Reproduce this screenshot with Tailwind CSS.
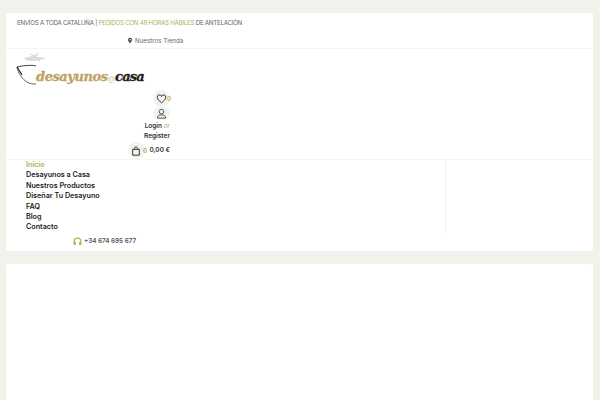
<!DOCTYPE html>
<html lang="en">
<head>
<meta charset="utf-8" />
<script src="https://cdn.jsdelivr.net/npm/@tailwindcss/browser@4"></script>
<title>Desayunos a Casa</title>
</head>
<body class="bg-[#f1f2ec] font-['Inter',sans-serif] h-[400px] overflow-hidden">
<div class="pt-[13px] px-[6px] pr-[7px]">
    <!-- Header card -->
    <div class="bg-white h-[238px] rounded-[2px] flex flex-col">
        <div class="h-[36px] border-b border-[#f6f6f3] pl-[11px]">
            <div class="h-[19px] flex items-center text-[6.200px] tracking-[-0.26px] text-[#666] whitespace-nowrap">
                <span>ENVÍOS A TODA CATALUÑA |&nbsp;</span>
                <span class="text-[#a9b55c]">PEDIDOS CON 48 HORAS HÁBILES</span>
                <span>&nbsp;DE ANTELACIÓN</span>
            </div>
            <div class="h-[17px] pl-[110px] flex items-center text-[6.200px] text-[#666]">
                <svg class="w-[6px] h-[7px] mr-[2px]" viewBox="0 0 24 24" fill="#444">
                    <path fill-rule="evenodd" d="M12 1a8 8 0 0 0-8 8c0 5.500 8 14 8 14s8-8.500 8-14a8 8 0 0 0-8-8zm0 5a3 3 0 1 1 0 6 3 3 0 0 1 0-6z" />
                </svg>
                Nuestros Tienda
            </div>
        </div>

        <!-- Logo -->
        <div class="h-[38px] pl-[10px] flex items-start">
            <svg class="w-[34px] h-[37px] shrink-0 mt-[1px]" viewBox="0 0 34 37" fill="none">
                <path d="M8 8c5-1 10-2 14-5 1 1 0 2-3 4 4 0 8 0 11 1-3 2-9 3-14 3-3 0-6 0-8-3z" fill="#dcdcd9" />
                <path d="M14 4c3 1 6 3 10 7" stroke="#cfcfcc" stroke-width="1" />
                <path d="M1 17c8-2 17-2 19-1" stroke="#444" stroke-width="1" />
                <path d="M1 17c1 6 5 12 10 15 3 2 6 2 9 2" stroke="#666" stroke-width="1" />
                <path d="M1 17l5 8" stroke="#222" stroke-width="1.200" />
            </svg>
            <div class="-ml-[14px] mt-[20px] font-['DejaVu_Serif',serif] font-bold italic text-[13px] leading-[16px] tracking-[-0.45px] whitespace-nowrap [-webkit-text-stroke:0.3px]">
                <span class="text-[#c0a265]">desayunos</span><span class="text-[#c9c3ae] text-[8px] font-normal not-italic [-webkit-text-stroke:0px]">@</span><span class="text-[#262019] tracking-[-0.8px]">casa</span>
            </div>
        </div>

        <!-- Header icons -->
        <div class="h-[72px] w-[164px] flex flex-col items-end text-[6.500px] font-semibold text-[#333]">
            <div class="flex items-center h-[17px] mt-[3px]">
                <span class="w-[17px] h-[17px] rounded-full bg-[#f3f3ee] flex items-center justify-center">
                    <svg class="w-[11px] h-[10px]" viewBox="0 0 24 24" fill="none" stroke="#222" stroke-width="2.200">
                        <path d="M12 21C6 16 2 13 2 8.500A5 5 0 0 1 12 6a5 5 0 0 1 10 2.500C22 13 18 16 12 21z" />
                    </svg>
                </span>
                <span class="text-[6px] font-bold text-[#d4b05a] w-[3px] -ml-[3px] leading-[5px]">0</span>
            </div>
            <span class="w-[17px] h-[17px] rounded-full bg-[#f3f3ee] flex items-center justify-center">
                <svg class="w-[11px] h-[11px]" viewBox="0 0 24 24" fill="none" stroke="#222" stroke-width="1.600">
                    <circle cx="12" cy="8" r="5" />
                    <path d="M3 22c0-5 4-7 9-7s9 2 9 7z" />
                </svg>
            </span>
            <div class="leading-[9.500px] mt-[2px] text-right">
                <div>Login <span class="italic font-normal text-[#a9b55c]">or</span></div>
                <div>Register</div>
            </div>
            <div class="flex items-center h-[17px] mt-[1px]">
                <span class="w-[17px] h-[17px] rounded-full bg-[#f3f3ee] flex items-center justify-center">
                    <svg class="w-[10px] h-[10px]" viewBox="0 0 24 24" fill="none" stroke="#222" stroke-width="2.200">
                        <path d="M4 8h16v14H4z" />
                        <path d="M8 8c0-8 8-8 8 0" />
                    </svg>
                </span>
                <span class="text-[6px] font-bold text-[#a9b55c] w-[3px] -ml-[2px] leading-[5px] mr-[3.500px]">0</span>
                <span>0,00 €</span>
            </div>
        </div>

        <!-- Nav -->
        <div class="flex h-[74px] border-t border-[#f6f6f3]">
            <nav class="w-[440px] border-r border-[#f1f1ee] pl-[20px] text-[7.200px] leading-[10.400px] font-semibold text-[#222]">
                <div class="text-[#a9b55c]">Inicio</div>
                <div>Desayunos a Casa</div>
                <div>Nuestros Productos</div>
                <div>Diseñar Tu Desayuno</div>
                <div>FAQ</div>
                <div>Blog</div>
                <div>Contacto</div>
            </nav>
        </div>

        <!-- Phone -->
        <div class="flex items-center pl-[67px] h-[18px] text-[6.300px] font-semibold text-[#555]">
            <svg class="w-[9px] h-[9px] mr-[2px] -mt-[2px]" viewBox="0 0 24 24" fill="none" stroke="#a9b55c" stroke-width="3">
                <path d="M3 15v-3a9 9 0 0 1 18 0v3" />
                <path d="M3 14h3v6H3zM18 14h3v6h-3z" fill="#a9b55c" />
            </svg>
            +34 674 695 677
        </div>
    </div>

    <!-- Content card -->
    <div class="bg-white h-[140px] mt-[13px] rounded-[2px]"></div>
</div>
</body>
</html>
